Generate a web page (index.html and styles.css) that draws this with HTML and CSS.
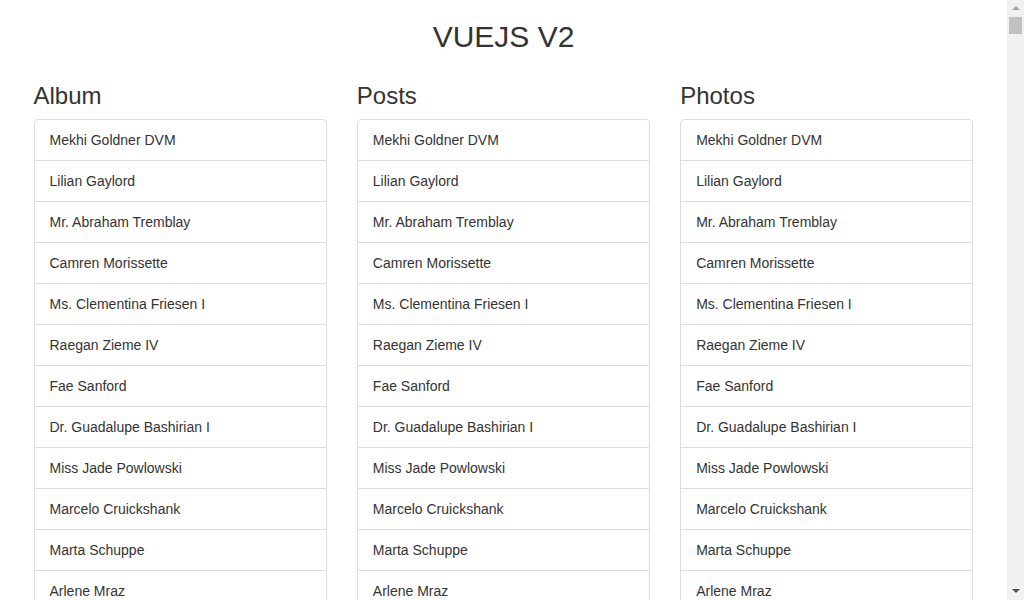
FILE: index.html
```html
<!DOCTYPE html>
<html>
<head>
<meta charset="utf-8">
<title>VUEJS V2</title>
<link rel="stylesheet" href="styles.css">
</head>
<body>
<div class="container">
  <h2 class="title">VUEJS V2</h2>
  <div class="row">
    <div class="col">
      <h3 class="col-title">Album</h3>
      <ul class="list-group">
        <li class="item">Mekhi Goldner DVM</li>
        <li class="item">Lilian Gaylord</li>
        <li class="item">Mr. Abraham Tremblay</li>
        <li class="item">Camren Morissette</li>
        <li class="item">Ms. Clementina Friesen I</li>
        <li class="item">Raegan Zieme IV</li>
        <li class="item">Fae Sanford</li>
        <li class="item">Dr. Guadalupe Bashirian I</li>
        <li class="item">Miss Jade Powlowski</li>
        <li class="item">Marcelo Cruickshank</li>
        <li class="item">Marta Schuppe</li>
        <li class="item">Arlene Mraz</li>
      </ul>
    </div>
    <div class="col">
      <h3 class="col-title">Posts</h3>
      <ul class="list-group">
        <li class="item">Mekhi Goldner DVM</li>
        <li class="item">Lilian Gaylord</li>
        <li class="item">Mr. Abraham Tremblay</li>
        <li class="item">Camren Morissette</li>
        <li class="item">Ms. Clementina Friesen I</li>
        <li class="item">Raegan Zieme IV</li>
        <li class="item">Fae Sanford</li>
        <li class="item">Dr. Guadalupe Bashirian I</li>
        <li class="item">Miss Jade Powlowski</li>
        <li class="item">Marcelo Cruickshank</li>
        <li class="item">Marta Schuppe</li>
        <li class="item">Arlene Mraz</li>
      </ul>
    </div>
    <div class="col">
      <h3 class="col-title">Photos</h3>
      <ul class="list-group">
        <li class="item">Mekhi Goldner DVM</li>
        <li class="item">Lilian Gaylord</li>
        <li class="item">Mr. Abraham Tremblay</li>
        <li class="item">Camren Morissette</li>
        <li class="item">Ms. Clementina Friesen I</li>
        <li class="item">Raegan Zieme IV</li>
        <li class="item">Fae Sanford</li>
        <li class="item">Dr. Guadalupe Bashirian I</li>
        <li class="item">Miss Jade Powlowski</li>
        <li class="item">Marcelo Cruickshank</li>
        <li class="item">Marta Schuppe</li>
        <li class="item">Arlene Mraz</li>
      </ul>
    </div>
  </div>
</div>
<div class="scrollbar">
  <span class="arrow-up"></span>
  <span class="thumb"></span>
  <span class="arrow-down"></span>
</div>
</body>
</html>
```

FILE: styles.css
```css
* { box-sizing: border-box; }
html, body { margin: 0; padding: 0; }
body {
  font-family: "Liberation Sans", Arial, Helvetica, sans-serif;
  font-size: 14px;
  line-height: 1.42857143;
  color: #333;
  background: #fff;
  padding-right: 17px;
}
.container {
  width: 970px;
  margin: 0 auto;
  padding: 0 15px;
}
.title {
  font-size: 30px;
  font-weight: 500;
  line-height: 1.1;
  margin: 20px 0 10px;
  text-align: center;
  color: #333;
}
.row {
  display: flex;
  margin: 0 -15px;
}
.col {
  flex: 0 0 33.33333333%;
  padding: 0 15px;
}
.col-title {
  font-size: 24px;
  font-weight: 500;
  line-height: 1.1;
  margin: 20px 0 10px;
}
.list-group {
  list-style: none;
  margin: 0 0 20px;
  padding: 0;
}
.item {
  display: block;
  padding: 10px 15px;
  margin-bottom: -1px;
  background: #fff;
  border: 1px solid #ddd;
}
.item:first-child {
  border-top-left-radius: 4px;
  border-top-right-radius: 4px;
}
.item:last-child {
  margin-bottom: 0;
  border-bottom-left-radius: 4px;
  border-bottom-right-radius: 4px;
}
.scrollbar {
  position: fixed;
  top: 0;
  right: 0;
  bottom: 0;
  width: 17px;
  background: #f1f1f1;
  display: flex;
  flex-direction: column;
  align-items: center;
}
.arrow-up {
  margin-top: 6px;
  width: 0;
  height: 0;
  border-left: 4px solid transparent;
  border-right: 4px solid transparent;
  border-bottom: 4px solid #a3a3a3;
}
.thumb {
  margin-top: 7px;
  width: 13px;
  height: 17px;
  background: #c1c1c1;
}
.arrow-down {
  margin-top: auto;
  margin-bottom: 7px;
  width: 0;
  height: 0;
  border-left: 4px solid transparent;
  border-right: 4px solid transparent;
  border-top: 4px solid #505050;
}
```
